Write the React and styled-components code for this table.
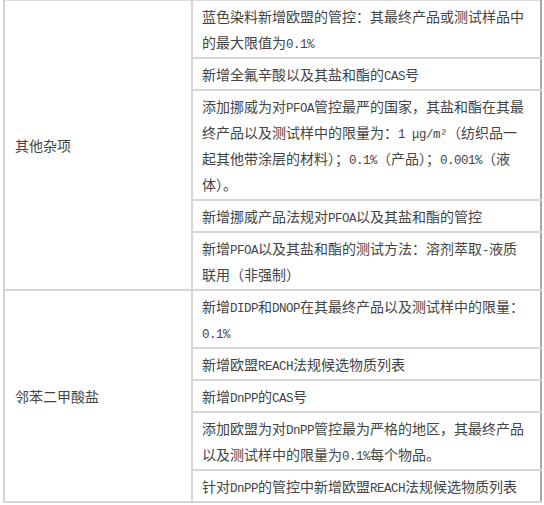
import React from "react";
import styled, { createGlobalStyle } from "styled-components";

const GlobalStyle = createGlobalStyle`
  html, body {
    margin: 0;
    padding: 0;
    background: #ffffff;
  }
`;

const groups = [
  {
    title: "其他杂项",
    items: [
      ["蓝色染料新增欧盟的管控：其最终产品或测试样品中", "的最大限值为0.1%"],
      ["新增全氟辛酸以及其盐和酯的CAS号"],
      [
        "添加挪威为对PFOA管控最严的国家，其盐和酯在其最",
        "终产品以及测试样中的限量为：1 μg/m²（纺织品一",
        "起其他带涂层的材料）；0.1%（产品）；0.001%（液",
        "体）。",
      ],
      ["新增挪威产品法规对PFOA以及其盐和酯的管控"],
      ["新增PFOA以及其盐和酯的测试方法：溶剂萃取-液质", "联用（非强制）"],
    ],
  },
  {
    title: "邻苯二甲酸盐",
    items: [
      ["新增DIDP和DNOP在其最终产品以及测试样中的限量：", "0.1%"],
      ["新增欧盟REACH法规候选物质列表"],
      ["新增DnPP的CAS号"],
      ["添加欧盟为对DnPP管控最为严格的地区，其最终产品", "以及测试样中的限量为0.1%每个物品。"],
      ["针对DnPP的管控中新增欧盟REACH法规候选物质列表"],
    ],
  },
];

// half-width runs get a narrow mono face, like the bitmap font in the shot
const renderLine = (text) =>
  text
    .split(/([A-Za-z0-9.%\-/μ² ]+)/)
    .filter(Boolean)
    .map((part, i) =>
      /^[A-Za-z0-9.%\-/μ² ]+$/.test(part) ? <Latin key={i}>{part}</Latin> : part
    );

const App = () => {
  return (
    <Page>
      <GlobalStyle />
      <Table>
        <tbody>
          {groups.map((group) =>
            group.items.map((lines, i) => (
              <tr key={group.title + i}>
                {i === 0 && (
                  <TitleCell rowSpan={group.items.length}>{group.title}</TitleCell>
                )}
                <Cell>
                  {lines.map((line, j) => (
                    <Line key={j}>{renderLine(line)}</Line>
                  ))}
                </Cell>
              </tr>
            ))
          )}
        </tbody>
      </Table>
    </Page>
  );
};

export default App;

const Page = styled.div`
  padding: 0 2px 0 3px;
  width: 544px;
  box-sizing: border-box;
`;

const Table = styled.table`
  width: 539px;
  border-collapse: collapse;
  table-layout: fixed;
  border-top: 1px solid #dcdcdc;
  border-left: 2px solid #d4d4d4;
  border-right: 2px solid #a9a9a9;
  border-bottom: 2px solid #a9a9a9;
  font-family: "Noto Sans CJK SC", sans-serif;
  font-size: 14px;
  color: #444444;
`;

const TitleCell = styled.td`
  width: 176px;
  padding: 0 0 0 10px;
  vertical-align: middle;
  border-right: 2px solid #d6d6d6;
  border-bottom: 2px solid #d6d6d6;
  white-space: nowrap;
`;

const Cell = styled.td`
  padding: 2px 0 2px 9px;
  border-bottom: 2px solid #d6d6d6;
  line-height: 26px;
  white-space: nowrap;
  overflow: hidden;
`;

const Line = styled.div`
  height: 26px;
`;

const Latin = styled.span`
  font-family: "Liberation Mono", monospace;
  font-size: 12.5px;
  letter-spacing: -0.5px;
  white-space: pre;
`;
